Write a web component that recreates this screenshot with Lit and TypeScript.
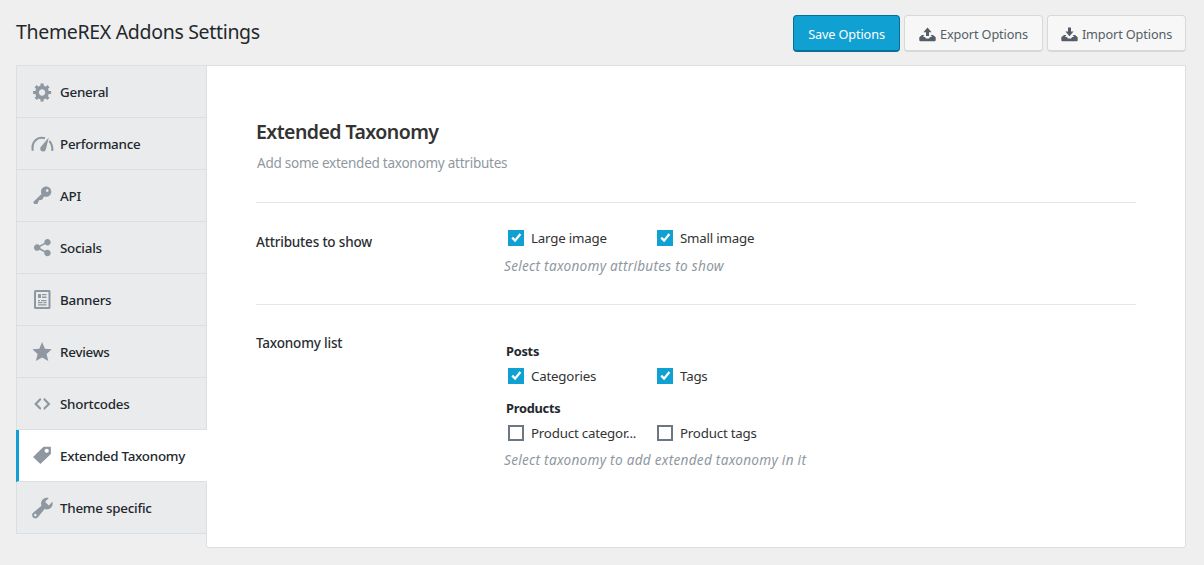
import { LitElement, html, svg, css, type TemplateResult, type SVGTemplateResult } from "lit";
import { customElement, property, state } from "lit/decorators.js";
import { classMap } from "lit/directives/class-map.js";

const icons: Record<string, SVGTemplateResult> = {
  general: svg`<path d="M18 12h-2.18c-.17.7-.44 1.35-.81 1.93l1.54 1.54-2.1 2.1-1.54-1.54c-.58.36-1.23.63-1.91.79V19H8v-2.18c-.68-.16-1.33-.43-1.91-.79l-1.54 1.54-2.12-2.12 1.54-1.54c-.36-.58-.63-1.23-.79-1.91H1V9.03h2.17c.16-.7.44-1.35.8-1.94L2.43 5.55l2.1-2.1 1.54 1.54c.58-.37 1.24-.64 1.93-.81V2h3v2.18c.68.16 1.33.43 1.91.79l1.54-1.54 2.12 2.12-1.54 1.54c.36.59.64 1.24.8 1.94H18V12zm-8.5 1.5c1.66 0 3-1.34 3-3s-1.34-3-3-3-3 1.34-3 3 1.34 3 3 3z" transform="translate(0 -.6) scale(1.06)"/>`,
  performance: svg`<path d="M.8 16.800C-.8 8.200 4.800 2.200 13 4.200" fill="none" stroke="currentColor" stroke-width="2.100"/><path d="M17.300 7q3.500 3.600 2.900 9.800" fill="none" stroke="currentColor" stroke-width="2.100"/><path d="M16.800 3.400l-2.900 11.900a2.900 2.900 0 1 1-5.200-2.300z"/>`,
  api: svg`<path transform="translate(.2 -.7) scale(1.04)" d="M16.950 2.580c1.960 1.950 1.960 5.120 0 7.070-1.510 1.510-3.750 1.840-5.590 1.010l-1.870 3.310-2.990.31L5 18H2l-1-2 7.950-7.690c-.92-1.870-.62-4.180.93-5.730 1.960-1.960 5.120-1.960 7.070 0zm-2.510 3.790c.74 0 1.330-.6 1.330-1.340 0-.73-.59-1.330-1.330-1.330-.73 0-1.330.6-1.330 1.330 0 .74.6 1.340 1.330 1.340z"/>`,
  socials: svg`<path d="M14.500 12q1.240 0 2.120.88T17.500 15t-.88 2.120-2.120.88-2.120-.88T11.500 15q0-.34.09-.69l-4.380-2.300Q6.320 13 5 13q-1.240 0-2.120-.88T2 10t.88-2.120T5 7q1.300 0 2.210.99l4.380-2.300q-.09-.35-.09-.69 0-1.240.88-2.120T14.500 2t2.120.88T17.500 5t-.88 2.120T14.500 8q-1.300 0-2.210-.99l-4.380 2.300Q8 9.660 8 10t-.09.69l4.380 2.300q.89-.99 2.210-.99z" transform="translate(-.2 -1.200) scale(1.08)"/>`,
  banners: svg`<path fill-rule="evenodd" d="M3.500 0h13A1.500 1.500 0 0 1 18.500 1.500v16A1.500 1.500 0 0 1 17 19H3.500A1.500 1.500 0 0 1 2 17.500v-16A1.500 1.500 0 0 1 3.500 0zM4 2v15h12.500V2zM6 4h3v4H6zm4 0h4.500v1.200H10zM10 6.500h4.500V8H10zM6 10h2v1.200H6zm3 0h5.500v1.200H9zM6 12h4.500v1.200H6zm5.500 0h3v1.200h-3zM6 14.200h8.500v1.200H6z"/>`,
  reviews: svg`<path d="M10.100 0l2.800 6.700 6.900.6-5.200 4.700 1.700 7-6.200-3.600L3.900 19l1.700-7L.4 7.300l6.900-.6z"/>`,
  shortcodes: svg`<path transform="translate(.1 -.3) scale(1.02)" d="M9 6l-4 4 4 4-1 2-6-6 6-6zm2 8l4-4-4-4 1-2 6 6-6 6z"/>`,
  taxonomy: svg`<path d="M11 2h7v7L8 19l-7-7zm3 6c1.100 0 2-.9 2-2s-.9-2-2-2-2 .9-2 2 .9 2 2 2z" transform="translate(0 -1.200) scale(1.05 1.01)"/>`,
  theme: svg`<path transform="translate(-2.500 -2.900) scale(1.29)" d="M16.680 9.770c-1.340 1.340-3.300 1.670-4.950.99l-5.410 6.520c-.99.99-2.590.99-3.580 0s-.99-2.590 0-3.570l6.520-5.420c-.68-1.650-.35-3.610.99-4.950 1.280-1.280 3.120-1.620 4.720-1.060l-2.890 2.890 2.820 2.820 2.860-2.870c.53 1.580.18 3.390-1.080 4.650zM3.810 16.210c.4.390 1.040.39 1.430 0 .4-.4.4-1.040 0-1.430-.39-.4-1.030-.4-1.430 0-.39.39-.39 1.030 0 1.430z"/>`,
};

const tray = svg`<path d="M3 8H5.300L4 10H6L6.800 11.400H10.200L11 10H13L11.700 8H14L16.700 10.300V13Q16.700 14.200 15.500 14.200H1.500Q.3 14.200 .3 13V10.300Z"/>`;
const arrowUp = svg`<path d="M8.500 .5L12.600 5.200H10V9H7V5.200H4.400Z"/>`;
const arrowDown = svg`<path d="M7 .5H10V4.500H12.600L8.500 9.200L4.400 4.500H7Z"/>`;

const sections: { id: string; label: string }[] = [
  { id: "general", label: "General" },
  { id: "performance", label: "Performance" },
  { id: "api", label: "API" },
  { id: "socials", label: "Socials" },
  { id: "banners", label: "Banners" },
  { id: "reviews", label: "Reviews" },
  { id: "shortcodes", label: "Shortcodes" },
  { id: "taxonomy", label: "Extended Taxonomy" },
  { id: "theme", label: "Theme specific" },
];

@customElement("option-check")
class OptionCheck extends LitElement {
  @property() label = "";
  @property({ type: Boolean }) checked = false;

  static styles = css`
    :host { display: block; width: 149px; }
    .option { display: flex; align-items: center; gap: 7px; height: 20px; cursor: pointer; }
    .box { box-sizing: border-box; flex: none; width: 16px; height: 16px; border: 2px solid #6c7781; background: #fff; }
    .on { border-color: #11a0d2; background: #11a0d2; }
    .tick { display: block; width: 12px; height: 12px; }
    .label { width: 112px; font-size: 13.3px; line-height: 20px; letter-spacing: -0.2px; color: #333; white-space: nowrap; }
  `;

  render() {
    return html`<div class="option" @click=${() => (this.checked = !this.checked)}>
      <span class=${classMap({ box: true, on: this.checked })}>
        ${this.checked
          ? html`<svg class="tick" viewBox="0 0 12 12"><path d="M2.200 5.600l2.900 3 5.300-6.600" fill="none" stroke="#fff" stroke-width="2.300"/></svg>`
          : ""}
      </span>
      <span class="label">${this.label}</span>
    </div>`;
  }
}

@customElement("app-root")
class AppRoot extends LitElement {
  @state() active = "taxonomy";

  static styles = css`
    :host {
      display: block; box-sizing: border-box; height: 565px; padding: 15px 18px 17px 16px;
      background: #efefef; color: #23282d; font-family: "Noto Sans", "Open Sans", sans-serif;
    }
    .header { display: flex; justify-content: space-between; height: 50px; }
    .title { margin: 0; font-size: 19.5px; line-height: 34px; font-weight: 400; letter-spacing: -0.32px; }
    .actions { display: flex; gap: 4px; }
    .button {
      box-sizing: border-box; display: flex; align-items: center; justify-content: center; gap: 4px;
      height: 37px; width: 139px; padding: 2px 0 0; border: 1px solid #d8d8d9; border-bottom-width: 2px; border-radius: 4px;
      background: #f7f7f7; color: #555d66; font: 400 12.7px/20px "Noto Sans", sans-serif; letter-spacing: -0.12px; white-space: nowrap;
    }
    .primary { width: 107px; background: #11a0d2; border-color: #086f96; color: #fff; }
    .glyph { width: 17px; height: 15px; fill: currentColor; }
    .layout { display: flex; align-items: flex-start; height: 483px; }
    .nav { flex: none; width: 191px; margin-right: -1px; border-top: 1px solid #dcdfe2; z-index: 1; }
    .item {
      box-sizing: border-box; display: flex; align-items: center; gap: 8px; height: 52px; padding: 1px 0 0 15px;
      border: solid #dcdfe2; border-width: 0 1px 1px; background: #eaebed; font-size: 13.4px; font-weight: 500; letter-spacing: -0.25px; cursor: pointer;
    }
    .current { border-left: 3px solid #11a0d2; border-right-color: #fff; padding-left: 13px; background: #fff; }
    .icon { flex: none; width: 20px; height: 20px; overflow: visible; fill: currentColor; color: #8f98a1; }
    .panel {
      box-sizing: border-box; flex: 1; height: 483px; padding: 53px 49px 0; background: #fff;
      border: 1px solid #dcdfe2; border-radius: 0 0 3px 3px;
    }
    .intro { box-sizing: border-box; height: 84px; border-bottom: 1px solid #e5e6e8; }
    .heading { margin: 0; font-size: 19.5px; line-height: 26px; font-weight: 600; letter-spacing: -0.55px; color: #333; }
    .lead { margin: 7px 0 0 1px; font-size: 13.5px; line-height: 22px; letter-spacing: -0.24px; color: #8f98a1; }
    .row { box-sizing: border-box; display: grid; grid-template-columns: 248px 1fr; }
    .attributes { height: 102px; padding-top: 25px; border-bottom: 1px solid #e5e6e8; }
    .taxonomies { padding-top: 24px; }
    .name { padding-top: 4px; font-size: 13.5px; line-height: 20px; font-weight: 500; letter-spacing: -0.18px; color: #2b2e32; }
    .checks { display: flex; padding-left: 4px; }
    .group { margin: 12px 0 5px 2px; font-size: 12.8px; line-height: 20px; font-weight: 700; letter-spacing: -0.25px; }
    .lists { display: flex; flex-direction: column; }
    .hint { margin: 8px 0 0; font-size: 13.6px; line-height: 20px; font-style: italic; letter-spacing: 0.28px; color: #8f98a1; }
    .lists .hint { margin-top: 7px; }
  `;

  private check(label: string, checked: boolean): TemplateResult {
    return html`<option-check label=${label} ?checked=${checked}></option-check>`;
  }

  render() {
    return html`
      <header class="header">
        <h1 class="title">ThemeREX Addons Settings</h1>
        <div class="actions">
          <button class="button primary">Save Options</button>
          <button class="button"><svg class="glyph" viewBox="0 0 17 15">${tray}${arrowUp}</svg>Export Options</button>
          <button class="button"><svg class="glyph" viewBox="0 0 17 15">${tray}${arrowDown}</svg>Import Options</button>
        </div>
      </header>
      <div class="layout">
        <nav class="nav">
          ${sections.map((s) => html`
            <div class=${classMap({ item: true, current: s.id === this.active })} @click=${() => (this.active = s.id)}>
              <svg class="icon" viewBox="0 0 20 20">${icons[s.id]}</svg><span>${s.label}</span>
            </div>`)}
        </nav>
        <main class="panel">
          <div class="intro">
            <h2 class="heading">Extended Taxonomy</h2>
            <p class="lead">Add some extended taxonomy attributes</p>
          </div>
          <section class="row attributes">
            <div class="name">Attributes to show</div>
            <div>
              <div class="checks">${this.check("Large image", true)}${this.check("Small image", true)}</div>
              <p class="hint">Select taxonomy attributes to show</p>
            </div>
          </section>
          <section class="row taxonomies">
            <div class="name">Taxonomy list</div>
            <div class="lists">
              <h3 class="group">Posts</h3>
              <div class="checks">${this.check("Categories", true)}${this.check("Tags", true)}</div>
              <h3 class="group">Products</h3>
              <div class="checks">${this.check("Product categor...", false)}${this.check("Product tags", false)}</div>
              <p class="hint">Select taxonomy to add extended taxonomy in it</p>
            </div>
          </section>
        </main>
      </div>`;
  }
}
